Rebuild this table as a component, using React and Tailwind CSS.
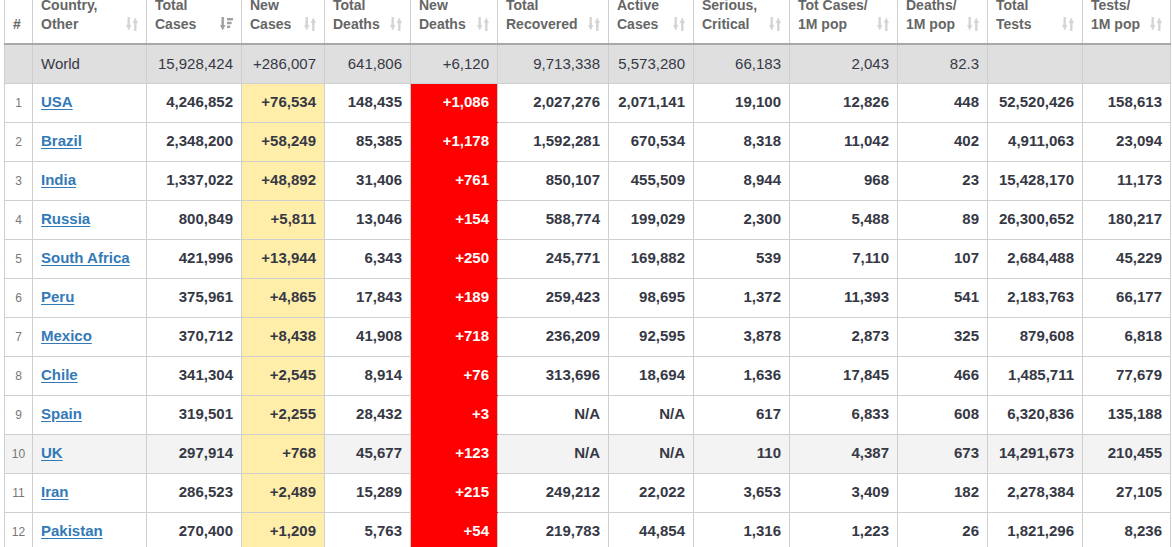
const headers = [
  ["", "#"],
  ["Country,", "Other"],
  ["Total", "Cases"],
  ["New", "Cases"],
  ["Total", "Deaths"],
  ["New", "Deaths"],
  ["Total", "Recovered"],
  ["Active", "Cases"],
  ["Serious,", "Critical"],
  ["Tot Cases/", "1M pop"],
  ["Deaths/", "1M pop"],
  ["Total", "Tests"],
  ["Tests/", "1M pop"],
];

const widths = [28, 114, 95, 83, 86, 87, 111, 85, 96, 108, 90, 95, 88];

const world = ["World", "15,928,424", "+286,007", "641,806", "+6,120", "9,713,338", "5,573,280", "66,183", "2,043", "82.3", "", ""];

const rows = [
  [1, "USA", "4,246,852", "+76,534", "148,435", "+1,086", "2,027,276", "2,071,141", "19,100", "12,826", "448", "52,520,426", "158,613"],
  [2, "Brazil", "2,348,200", "+58,249", "85,385", "+1,178", "1,592,281", "670,534", "8,318", "11,042", "402", "4,911,063", "23,094"],
  [3, "India", "1,337,022", "+48,892", "31,406", "+761", "850,107", "455,509", "8,944", "968", "23", "15,428,170", "11,173"],
  [4, "Russia", "800,849", "+5,811", "13,046", "+154", "588,774", "199,029", "2,300", "5,488", "89", "26,300,652", "180,217"],
  [5, "South Africa", "421,996", "+13,944", "6,343", "+250", "245,771", "169,882", "539", "7,110", "107", "2,684,488", "45,229"],
  [6, "Peru", "375,961", "+4,865", "17,843", "+189", "259,423", "98,695", "1,372", "11,393", "541", "2,183,763", "66,177"],
  [7, "Mexico", "370,712", "+8,438", "41,908", "+718", "236,209", "92,595", "3,878", "2,873", "325", "879,608", "6,818"],
  [8, "Chile", "341,304", "+2,545", "8,914", "+76", "313,696", "18,694", "1,636", "17,845", "466", "1,485,711", "77,679"],
  [9, "Spain", "319,501", "+2,255", "28,432", "+3", "N/A", "N/A", "617", "6,833", "608", "6,320,836", "135,188"],
  [10, "UK", "297,914", "+768", "45,677", "+123", "N/A", "N/A", "110", "4,387", "673", "14,291,673", "210,455"],
  [11, "Iran", "286,523", "+2,489", "15,289", "+215", "249,212", "22,022", "3,653", "3,409", "182", "2,278,384", "27,105"],
  [12, "Pakistan", "270,400", "+1,209", "5,763", "+54", "219,783", "44,854", "1,316", "1,223", "26", "1,821,296", "8,236"],
];

function SortIcon({ active }) {
  if (active) {
    return (
      <svg width="13" height="14" viewBox="0 0 13 14" className="shrink-0 fill-[#a0a0a0]">
        <rect x="1.5" y="0" width="2.4" height="9" />
        <polygon points="0,8 5.4,8 2.7,13.5" />
        <rect x="7" y="1" width="6" height="2.4" />
        <rect x="7" y="4.8" width="4.6" height="2.4" />
        <rect x="7" y="8.6" width="3.2" height="2.4" />
      </svg>
    );
  }
  return (
    <svg width="12" height="14" viewBox="0 0 12 14" className="shrink-0 fill-[#d4d4d4]">
      <rect x="1.5" y="0" width="2.4" height="9" />
      <polygon points="0,8 5.4,8 2.7,13.5" />
      <rect x="8.1" y="5" width="2.4" height="9" />
      <polygon points="6.6,6 12,6 9.3,0.5" />
    </svg>
  );
}

export default function App() {
  return (
    <div className="min-h-screen bg-white pl-[4px] overflow-hidden" style={{ fontFamily: '"Liberation Sans", Arial, sans-serif' }}>
      <table className="table-fixed border-collapse w-[1167px] -mt-[12px]">
        <colgroup>
          {widths.map((w, i) => (
            <col key={i} style={{ width: w }} />
          ))}
        </colgroup>
        <thead>
          <tr>
            {headers.map((h, i) => (
              <th
                key={i}
                className="border border-[#cfcfcf] border-b-2 border-b-[#a9a9a9] px-[8px] pt-[7px] pb-[9px] align-bottom text-left text-[14px] leading-[19px] font-bold text-[#666]"
              >
                {i === 0 ? (
                  <div>#</div>
                ) : (
                  <div className="flex items-end justify-between">
                    <div>
                      <div className="whitespace-nowrap">{h[0]}</div>
                      <div className="whitespace-nowrap">{h[1]}</div>
                    </div>
                    <div className="mb-[3px]">
                      <SortIcon active={i === 2} />
                    </div>
                  </div>
                )}
              </th>
            ))}
          </tr>
        </thead>
        <tbody className="text-[15px] text-[#363945]">
          <tr className="bg-[#dfdfdf] h-[39px]">
            <td className="border border-[#cfcfcf]"></td>
            <td className="border border-[#cfcfcf] px-[8px] text-left">{world[0]}</td>
            {world.slice(1).map((v, i) => (
              <td key={i} className="border border-[#cfcfcf] px-[8px] text-right">
                {v}
              </td>
            ))}
          </tr>
          {rows.map((r) => (
            <tr key={r[0]} className={`h-[39px] ${r[0] === 10 ? "bg-[#f3f3f3]" : "bg-white"}`}>
              <td className="border border-[#cfcfcf] text-center text-[12px] text-[#777]">{r[0]}</td>
              <td className="border border-[#cfcfcf] px-[8px] text-left font-bold">
                <a href="#" className="text-[#337ab7] underline underline-offset-2">
                  {r[1]}
                </a>
              </td>
              {r.slice(2).map((v, i) => {
                let cls = "border border-[#cfcfcf] px-[8px] text-right font-bold";
                if (i === 1) cls += " bg-[#ffeeaa]";
                if (i === 3) cls += " bg-[#ff0000] text-white border-y-[#ff0000]";
                return (
                  <td key={i} className={cls}>
                    {v}
                  </td>
                );
              })}
            </tr>
          ))}
        </tbody>
      </table>
    </div>
  );
}
